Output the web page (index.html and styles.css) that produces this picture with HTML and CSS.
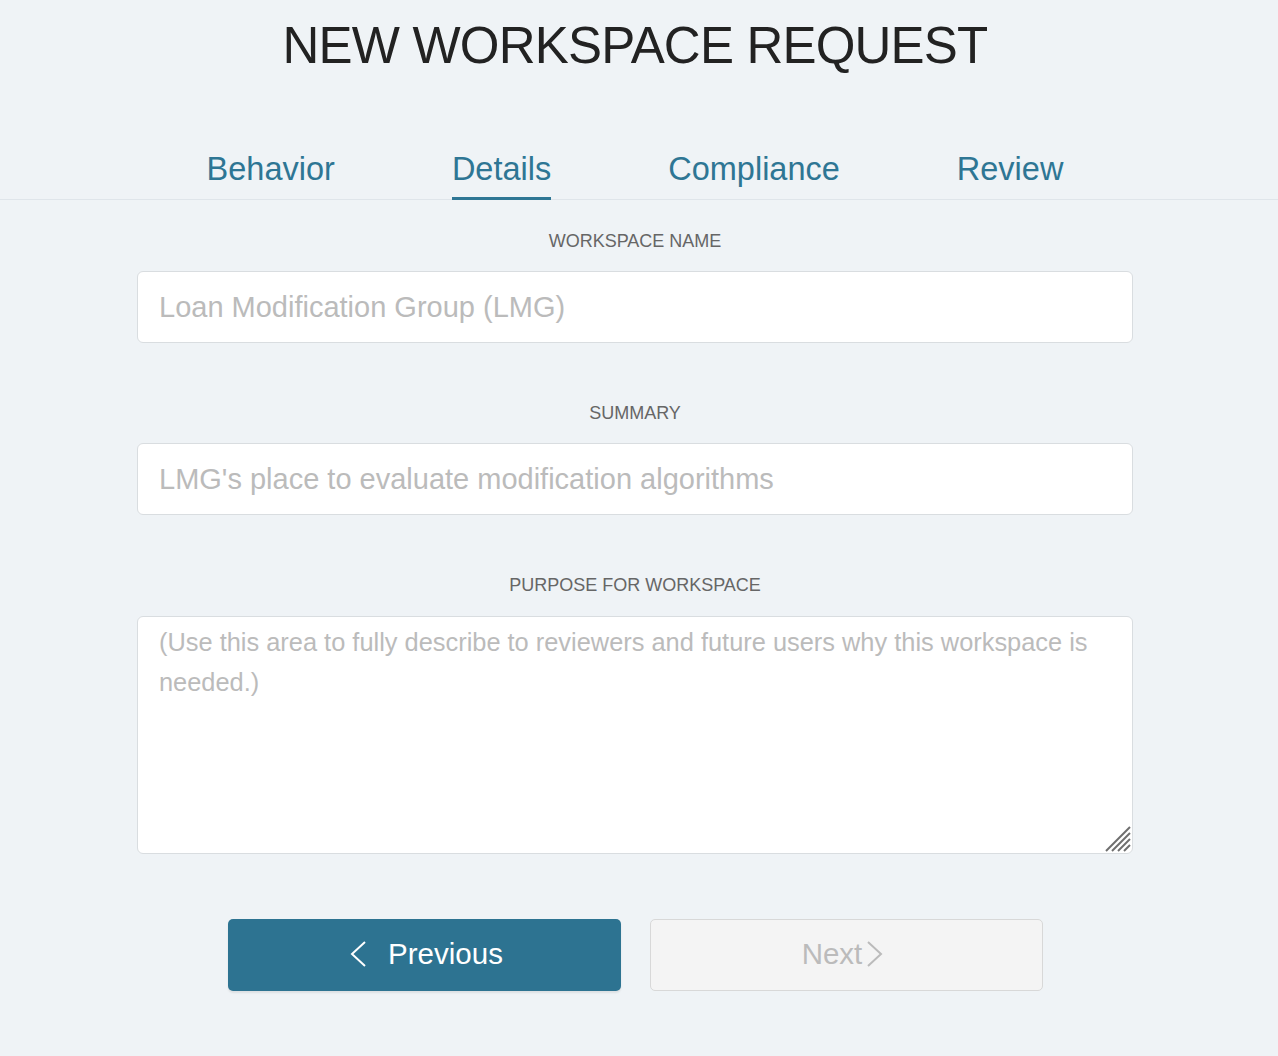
FILE: index.html
```html
<!DOCTYPE html>
<html lang="en">
<head>
<meta charset="utf-8">
<title>New Workspace Request</title>
<link rel="stylesheet" href="styles.css">
</head>
<body>
<div class="page">
  <h1 class="title">NEW WORKSPACE REQUEST</h1>
  <nav class="tabs">
    <a class="tab">Behavior</a>
    <a class="tab active">Details</a>
    <a class="tab">Compliance</a>
    <a class="tab">Review</a>
  </nav>
  <form class="form">
    <div class="field">
      <label class="label" for="wsname">WORKSPACE NAME</label>
      <input class="input" id="wsname" type="text" placeholder="Loan Modification Group (LMG)">
    </div>
    <div class="field">
      <label class="label" for="summary">SUMMARY</label>
      <input class="input" id="summary" type="text" placeholder="LMG's place to evaluate modification algorithms">
    </div>
    <div class="field field-area">
      <label class="label" for="purpose">PURPOSE FOR WORKSPACE</label>
      <div class="area-wrap">
        <textarea class="area" id="purpose" placeholder="(Use this area to fully describe to reviewers and future users why this workspace is needed.)"></textarea>
        <svg class="grip" width="26" height="26" viewBox="0 0 26 26">
          <line x1="1" y1="25" x2="25" y2="1"/>
          <line x1="7" y1="25" x2="25" y2="7"/>
          <line x1="13" y1="25" x2="25" y2="13"/>
          <line x1="19" y1="25" x2="25" y2="19"/>
        </svg>
      </div>
    </div>
    <div class="actions">
      <button type="button" class="btn btn-prev">
        <svg class="chev" width="18" height="28" viewBox="0 0 18 28"><polyline points="16,2 3,14 16,26"/></svg>
        <span>Previous</span>
      </button>
      <button type="button" class="btn btn-next" disabled>
        <span>Next</span>
        <svg class="chev" width="18" height="28" viewBox="0 0 18 28"><polyline points="2,2 15,14 2,26"/></svg>
      </button>
    </div>
  </form>
</div>
</body>
</html>
```
FILE: styles.css
```css
html, body {
  margin: 0;
  padding: 0;
  background: #eff3f6;
}
body {
  font-family: "Liberation Sans", Arial, Helvetica, sans-serif;
  color: #222;
}
.page {
  width: 1270px;
  min-height: 1056px;
}
.title {
  margin: 16px 0 0;
  font-size: 51px;
  line-height: 60px;
  font-weight: 400;
  letter-spacing: -0.8px;
  text-align: center;
  color: #222;
}
.tabs {
  margin-top: 73px;
  display: flex;
  justify-content: center;
  gap: 117px;
  border-bottom: 1px solid #dfe5ea;
  width: 1278px;
  box-sizing: border-box;
  padding-right: 8px;
}
.tab {
  font-size: 32.5px;
  line-height: 40px;
  color: #2e7694;
  padding-bottom: 8px;
  border-bottom: 3px solid transparent;
  margin-bottom: -1px;
  cursor: pointer;
}
.tab.active {
  border-bottom-color: #2e7694;
}
.form {
  width: 996px;
  margin: 0 auto;
  padding-top: 30px;
}
.field {
  display: flex;
  flex-direction: column;
  margin-bottom: 59px;
}
.field-area {
  margin-bottom: 0;
}
.label {
  display: block;
  text-align: center;
  font-size: 18px;
  line-height: 22px;
  color: #666;
  margin-bottom: 19px;
}
.field-area .label {
  margin-bottom: 20px;
}
.input {
  box-sizing: border-box;
  height: 72px;
  width: 100%;
  margin: 0;
  padding: 0 21px;
  border: 1px solid #d9dde0;
  border-radius: 6px;
  background: #fff;
  font-family: "Liberation Sans", Arial, Helvetica, sans-serif;
  font-size: 29px;
  color: #333;
  outline: none;
}
.input::placeholder,
.area::placeholder {
  color: #bbbbbb;
  opacity: 1;
}
.area-wrap {
  position: relative;
}
.area {
  display: block;
  box-sizing: border-box;
  width: 100%;
  height: 238px;
  margin: 0;
  padding: 5px 21px;
  border: 1px solid #d9dde0;
  border-radius: 6px;
  background: #fff;
  font-family: "Liberation Sans", Arial, Helvetica, sans-serif;
  font-size: 25.4px;
  line-height: 40px;
  color: #333;
  resize: none;
  outline: none;
}
.grip {
  position: absolute;
  right: 2px;
  bottom: 2px;
  stroke: #6e6e6e;
  stroke-width: 2;
}
.actions {
  display: flex;
  justify-content: center;
  gap: 29px;
  margin-top: 65px;
  width: 1270px;
  margin-left: -137px;
}
.btn {
  box-sizing: border-box;
  width: 393px;
  height: 72px;
  margin: 0;
  border-radius: 5px;
  display: flex;
  align-items: center;
  justify-content: center;
  font-family: "Liberation Sans", Arial, Helvetica, sans-serif;
  font-size: 29.5px;
  cursor: pointer;
}
.btn-prev {
  background: #2d7391;
  color: #fff;
  border: none;
  box-shadow: 0 2px 2px rgba(0, 0, 0, 0.08);
  gap: 21px;
  padding-right: 2px;
  padding-bottom: 4px;
}
.btn-prev .chev {
  stroke: #fff;
  stroke-width: 2;
  fill: none;
}
.btn-next {
  background: #f4f4f4;
  color: #bbbbbb;
  border: 1px solid #d8d8d8;
  gap: 4px;
  padding-left: 0;
  padding-bottom: 4px;
  cursor: default;
}
.btn-next .chev {
  stroke: #bbbbbb;
  stroke-width: 2;
  fill: none;
}
```
